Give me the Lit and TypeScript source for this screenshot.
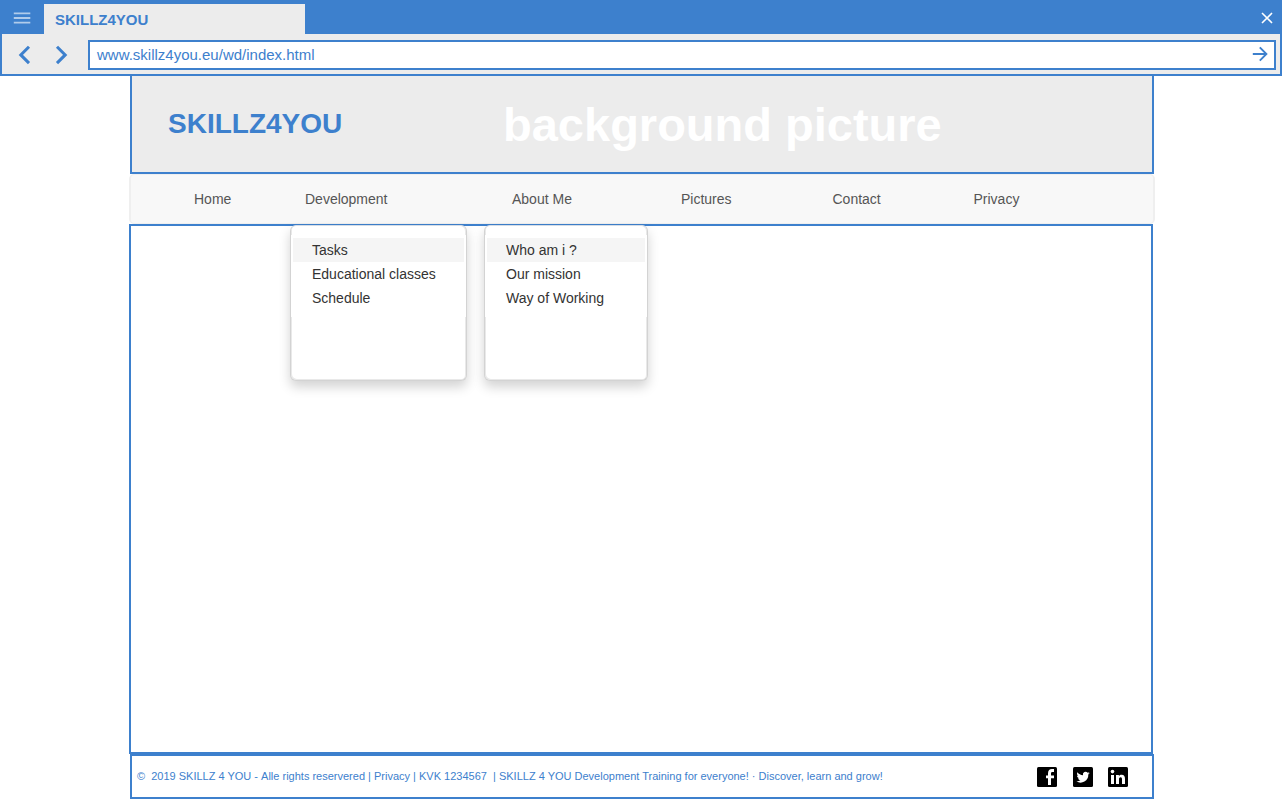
import { LitElement, html, css } from "lit";
import { customElement, property } from "lit/decorators.js";

@customElement("drop-menu")
class DropMenu extends LitElement {
  @property({ attribute: false }) items: string[] = [];

  static styles = css`
    :host {
      display: block;
      box-sizing: border-box;
      height: 156px;
      padding: 9px 0;
      background: #fff;
      border: 1px solid #d3d3d3;
      border-top-color: #d5dce5;
      border-radius: 6px;
      box-shadow: 0 6px 12px rgba(0, 0, 0, 0.175), inset 1px -1px 0 #e9e9e9, inset -1px 0 0 #e9e9e9;
    }
    .list {
      box-sizing: border-box;
      height: 82px;
      padding: 3px 2px;
      background: #fff;
    }
    .item {
      height: 24px;
      padding-left: 19px;
      font-size: 14px;
      line-height: 24px;
      color: #333;
      white-space: nowrap;
    }
    .item:first-child {
      background: #f5f5f5;
    }
  `;

  render() {
    return html`<div class="list">${this.items.map((t) => html`<div class="item">${t}</div>`)}</div>`;
  }
}

@customElement("app-root")
class AppRoot extends LitElement {
  static styles = css`
    :host {
      display: block;
      width: 1282px;
      height: 799px;
      overflow: hidden;
      background: #fff;
      color: #3d80cd;
      font-family: "Liberation Sans", Arial, sans-serif;
    }
    * {
      box-sizing: border-box;
    }
    svg {
      display: block;
    }
    .browser {
      height: 76px;
      border: 2px solid #3d80cd;
      background: #ececec;
    }
    .tabs {
      display: flex;
      height: 32px;
      background: #3d80cd;
    }
    .burger {
      width: 42px;
      padding: 8px 0 0 11px;
    }
    .tab {
      width: 261px;
      height: 30px;
      margin-top: 2px;
      padding-left: 11px;
      background: #ececec;
      font-size: 15px;
      font-weight: bold;
      line-height: 32px;
    }
    .close {
      margin: 9px 6px 0 auto;
    }
    .tools {
      display: flex;
      height: 40px;
      padding: 6px 4px 4px 0;
    }
    .arrows {
      display: flex;
      width: 86px;
    }
    .url {
      display: flex;
      flex: 1;
      justify-content: space-between;
      height: 30px;
      padding: 0 6px 0 7px;
      border: 2px solid #3d80cd;
      background: #fff;
      font-size: 15px;
      line-height: 26px;
    }
    .go {
      margin-top: 4px;
    }
    .header {
      display: flex;
      width: 1024px;
      height: 98px;
      margin-left: 130px;
      border: 2px solid #3d80cd;
      border-top: 0;
      background: #ececec;
      font-weight: bold;
      white-space: nowrap;
    }
    .brand {
      width: 371px;
      padding-left: 36px;
      font-size: 28px;
      line-height: 96px;
    }
    .backdrop {
      color: #fff;
      font-size: 47px;
      line-height: 98px;
    }
    .nav {
      display: grid;
      grid-template-columns: 111px 207px 169px 151.5px 141px 1fr;
      width: 1026px;
      height: 50px;
      margin-left: 129px;
      padding-left: 63px;
      border: 2px solid #efefef;
      border-width: 1px 2px;
      border-radius: 5px;
      background: #f8f8f8;
      color: #555;
      font-size: 14px;
      line-height: 48px;
      white-space: nowrap;
    }
    .content {
      display: flex;
      align-items: flex-start;
      gap: 17px;
      width: 1024px;
      height: 530px;
      margin-left: 129px;
      padding-left: 159px;
      border: 2px solid #3d80cd;
    }
    .development {
      width: 177px;
      margin-top: -1px;
    }
    .about {
      width: 164px;
      margin-top: -1px;
    }
    .footer {
      display: flex;
      align-items: center;
      width: 1024px;
      height: 45px;
      margin-left: 130px;
      padding: 0 24px 0 5px;
      border: 2px solid #3d80cd;
      font-size: 11px;
      white-space: pre;
    }
    .legal {
      display: flex;
      padding-bottom: 2px;
    }
    .social {
      display: flex;
      gap: 15.5px;
      margin: 1px 0 0 auto;
    }
  `;

  render() {
    return html`
      <div class="browser">
        <div class="tabs">
          <div class="burger">
            <svg width="18" height="16" stroke="#fff" stroke-opacity=".6" stroke-width="1.8">
              <path d="M.8 3.4H17.3M.8 8H17.3M.8 12.6H17.3" />
            </svg>
          </div>
          <div class="tab">SKILLZ4YOU</div>
          <svg class="close" width="14" height="14" fill="none" stroke="#fff" stroke-width="1.6">
            <path d="M2 2L12 12M12 2L2 12" />
          </svg>
        </div>
        <div class="tools">
          <div class="arrows">
            <svg width="86" height="30" fill="none" stroke="#3d80cd" stroke-width="3">
              <path d="M27 6.7L18.8 14.9L27 23.1M55 6.7L63.2 14.9L55 23.1" />
            </svg>
          </div>
          <div class="url">
            <span>www.skillz4you.eu/wd/index.html</span>
            <svg class="go" width="16" height="16" fill="none" stroke="#3d80cd" stroke-width="1.9">
              <path d="M.8 8H14.4M7.8 1.4L14.4 8L7.8 14.6" />
            </svg>
          </div>
        </div>
      </div>
      <div class="header">
        <div class="brand">SKILLZ4YOU</div>
        <div class="backdrop">background picture</div>
      </div>
      <div class="nav">
        ${["Home", "Development", "About Me", "Pictures", "Contact", "Privacy"].map(
          (t) => html`<span>${t}</span>`
        )}
      </div>
      <div class="content">
        <drop-menu class="development" .items=${["Tasks", "Educational classes", "Schedule"]}></drop-menu>
        <drop-menu class="about" .items=${["Who am i ?", "Our mission", "Way of Working"]}></drop-menu>
      </div>
      <div class="footer">
        <div class="legal"><span>©&nbsp; 2019 SKILLZ 4 YOU - </span><span>Alle rights reservered | Privacy | KVK 1234567&nbsp; | SKILLZ 4 YOU Development Training for everyone! </span><span>· Discover, learn and grow!</span></div>
        <div class="social">
          <svg width="20" height="20">
            <rect width="20" height="20" rx="1.5" />
            <path fill="#fff" d="M11 18V11.2H9V8.4H11V6.3C11 3.5 12.5 2 15 2H17V5H15.5C14.4 5 14 5.5 14 6.5V8.4H17V11.2H14V18Z" />
          </svg>
          <svg width="20" height="20">
            <rect width="20" height="20" rx="1.5" />
            <path fill="#fff" d="M16.8 6.1c-.5.2-1 .4-1.6.5.6-.3 1-.9 1.2-1.5-.5.3-1.1.5-1.7.7a2.7 2.7 0 0 0-4.700 2.400c-2.300-.1-4.300-1.200-5.600-2.900-.7 1.200-.4 2.800.8 3.600-.4 0-.9-.1-1.200-.3 0 1.300.9 2.400 2.100 2.700-.4.100-.8.100-1.200 0 .3 1.100 1.300 1.900 2.500 1.900A5.500 5.500 0 0 1 3.400 14.300 7.700 7.700 0 0 0 15.300 7.500c.6-.4 1.100-.9 1.500-1.400Z" />
          </svg>
          <svg width="20" height="20">
            <rect width="20" height="20" rx="1.5" />
            <path fill="#fff" d="M3 8H6V17H3ZM8 8H10.9V9.2C11.5 8.3 12.4 7.8 13.6 7.8C16.3 7.8 17 9.5 17 12V17H14V12.5C14 11.3 13.9 10.2 12.6 10.2C11.3 10.2 11 11.2 11 12.4V17H8Z" />
            <circle cx="4.5" cy="4.6" r="1.8" fill="#fff" />
          </svg>
        </div>
      </div>
    `;
  }
}
